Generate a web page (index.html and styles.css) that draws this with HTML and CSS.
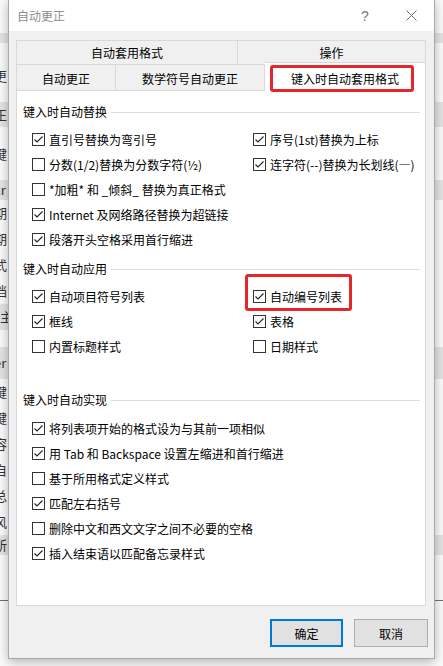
FILE: index.html
```html
<!DOCTYPE html>
<html lang="zh-CN">
<head>
  <meta charset="UTF-8" />
  <meta name="viewport" content="width=device-width, initial-scale=1" />
  <title>自动更正</title>
  <link rel="stylesheet" href="styles.css">
</head>
<body>
  <!-- Word window behind the dialog, only its edges show -->
  <div class="backdrop">
    <div class="bd bd-top"></div>
    <div class="bd band bd-thin"></div>
    <div class="bd bd-tall"><span>更</span></div>
    <div class="bd band"><span>正</span></div>
    <div class="bd bd-mid"><span>键</span></div>
    <div class="bd band bd-short"><span>cr</span></div>
    <div class="bd-lines"><span>期</span><span>期</span><span>式</span><span>档</span><span class="hl">主</span></div>
    <div class="bd bd-gap"></div>
    <div class="bd band bd-wide"><span>er</span></div>
    <div class="bd-lines"><span>键</span><span>键</span><span>容</span><span>自</span><span>总</span><span>风</span></div>
    <div class="bd band bd-short"><span>所</span></div>
    <div class="bd bd-foot"></div>
  </div>

  <div class="dialog">
    <div class="titlebar">
      <span class="title">自动更正</span>
      <span class="caption-btn help">?</span>
      <span class="caption-btn">
        <svg width="11" height="11" viewBox="0 0 11 11"><path d="M0.5 0.5 L10.5 10.5 M10.5 0.5 L0.5 10.5" stroke="#6b6b6b" stroke-width="1" fill="none"/></svg>
      </span>
    </div>

    <div class="tabs">
      <div class="tab-row row-top">
        <div class="tab tab-wide">自动套用格式</div>
        <div class="tab tab-rest">操作</div>
      </div>
      <div class="tab-row">
        <div class="tab tab-a">自动更正</div>
        <div class="tab tab-b">数学符号自动更正</div>
        <div class="tab tab-c active">键入时自动套用格式<span class="mark"></span></div>
      </div>
    </div>

    <div class="panel">
      <div class="section">
        <div class="legend">键入时自动替换</div>
        <div class="options">
          <label class="opt"><span class="box"><svg width="11" height="11" viewBox="0 0 11 11"><polyline points="1.5,5.5 4,8 9.5,2.5" fill="none" stroke="#222" stroke-width="1.1"/></svg></span>直引号替换为弯引号</label>
          <label class="opt"><span class="box"><svg width="11" height="11" viewBox="0 0 11 11"><polyline points="1.5,5.5 4,8 9.5,2.5" fill="none" stroke="#222" stroke-width="1.1"/></svg></span>序号(1st)替换为上标</label>
          <label class="opt"><span class="box"></span>分数(1/2)替换为分数字符(½)</label>
          <label class="opt"><span class="box"><svg width="11" height="11" viewBox="0 0 11 11"><polyline points="1.5,5.5 4,8 9.5,2.5" fill="none" stroke="#222" stroke-width="1.1"/></svg></span>连字符(--)替换为长划线(—)</label>
          <label class="opt wide"><span class="box"></span>*加粗* 和 _倾斜_ 替换为真正格式</label>
          <label class="opt wide"><span class="box"><svg width="11" height="11" viewBox="0 0 11 11"><polyline points="1.5,5.5 4,8 9.5,2.5" fill="none" stroke="#222" stroke-width="1.1"/></svg></span>Internet 及网络路径替换为超链接</label>
          <label class="opt wide"><span class="box"><svg width="11" height="11" viewBox="0 0 11 11"><polyline points="1.5,5.5 4,8 9.5,2.5" fill="none" stroke="#222" stroke-width="1.1"/></svg></span>段落开头空格采用首行缩进</label>
        </div>
      </div>

      <div class="section gap-sm">
        <div class="legend">键入时自动应用</div>
        <div class="options">
          <label class="opt"><span class="box"><svg width="11" height="11" viewBox="0 0 11 11"><polyline points="1.5,5.5 4,8 9.5,2.5" fill="none" stroke="#222" stroke-width="1.1"/></svg></span>自动项目符号列表</label>
          <label class="opt"><span class="box"><svg width="11" height="11" viewBox="0 0 11 11"><polyline points="1.5,5.5 4,8 9.5,2.5" fill="none" stroke="#222" stroke-width="1.1"/></svg></span>自动编号列表<span class="mark mark-opt"></span></label>
          <label class="opt"><span class="box"><svg width="11" height="11" viewBox="0 0 11 11"><polyline points="1.5,5.5 4,8 9.5,2.5" fill="none" stroke="#222" stroke-width="1.1"/></svg></span>框线</label>
          <label class="opt"><span class="box"><svg width="11" height="11" viewBox="0 0 11 11"><polyline points="1.5,5.5 4,8 9.5,2.5" fill="none" stroke="#222" stroke-width="1.1"/></svg></span>表格</label>
          <label class="opt"><span class="box"></span>内置标题样式</label>
          <label class="opt"><span class="box"></span>日期样式</label>
        </div>
      </div>

      <div class="section gap-lg">
        <div class="legend">键入时自动实现</div>
        <div class="options single">
          <label class="opt"><span class="box"><svg width="11" height="11" viewBox="0 0 11 11"><polyline points="1.5,5.5 4,8 9.5,2.5" fill="none" stroke="#222" stroke-width="1.1"/></svg></span>将列表项开始的格式设为与其前一项相似</label>
          <label class="opt"><span class="box"><svg width="11" height="11" viewBox="0 0 11 11"><polyline points="1.5,5.5 4,8 9.5,2.5" fill="none" stroke="#222" stroke-width="1.1"/></svg></span>用 Tab 和 Backspace 设置左缩进和首行缩进</label>
          <label class="opt"><span class="box"></span>基于所用格式定义样式</label>
          <label class="opt"><span class="box"><svg width="11" height="11" viewBox="0 0 11 11"><polyline points="1.5,5.5 4,8 9.5,2.5" fill="none" stroke="#222" stroke-width="1.1"/></svg></span>匹配左右括号</label>
          <label class="opt"><span class="box"></span>删除中文和西文文字之间不必要的空格</label>
          <label class="opt"><span class="box"><svg width="11" height="11" viewBox="0 0 11 11"><polyline points="1.5,5.5 4,8 9.5,2.5" fill="none" stroke="#222" stroke-width="1.1"/></svg></span>插入结束语以匹配备忘录样式</label>
        </div>
      </div>
    </div>

    <div class="actions">
      <button class="btn primary">确定</button>
      <button class="btn">取消</button>
    </div>
  </div>
</body>
</html>
```

FILE: styles.css
```css
* {
  box-sizing: border-box;
}
html, body {
  margin: 0;
}
body {
  position: relative;
  width: 443px;
  height: 666px;
  overflow: hidden;
  background: #fafafa;
  font-family: "Noto Sans CJK SC", "Microsoft YaHei", sans-serif;
  font-size: 12px;
  line-height: 16px;
  color: #000;
}

/* backdrop */
.backdrop {
  color: #333;
  font-size: 13px;
}
.bd {
  display: flex;
  align-items: center;
}
.bd span, .bd-lines span {
  margin-left: -6px;
}
.band {
  background: #e3e3e3;
  height: 25px;
}
.bd-top { height: 33px; }
.bd-thin { height: 10px; }
.bd-tall { height: 59px; padding-top: 6px; }
.bd-mid { height: 53px; }
.bd-short { height: 20px; }
.bd-wide { height: 32px; }
.bd-gap { height: 17px; }
.bd-lines {
  display: flex;
  flex-direction: column;
}
.bd-lines span {
  height: 26px;
  line-height: 26px;
}
.bd-lines .hl {
  background: #e3e3e3;
  width: 20px;
  padding-left: 6px;
}
.bd-foot {
  height: 46px;
  border-bottom: 1px solid #6e6e6e;
}

/* dialog */
.dialog {
  position: absolute;
  left: 8px;
  top: -1px;
  width: 427px;
  height: 660px;
  background: #f0f0f0;
  border: 1px solid #a9a9a9;
  box-shadow: 0 3px 10px rgba(0, 0, 0, 0.28);
  display: flex;
  flex-direction: column;
}
.titlebar {
  height: 31px;
  background: #fff;
  display: flex;
  align-items: center;
  padding-left: 8px;
}
.title {
  flex: 1;
  color: #8c8c8c;
}
.caption-btn {
  width: 46px;
  height: 31px;
  display: flex;
  align-items: center;
  justify-content: center;
}
.help {
  font-family: "Liberation Sans", sans-serif;
  font-size: 14px;
  color: #777;
}

/* tabs */
.tabs {
  margin: 9px 0 0 7px;
  width: 410px;
}
.tab-row {
  display: flex;
  height: 26px;
}
.tab-row.row-top {
  height: 24px;
}
.tab {
  border: 1px solid #d9d9d9;
  border-bottom: none;
  display: flex;
  align-items: center;
  justify-content: center;
  padding-top: 2px;
  white-space: nowrap;
}
.tab + .tab {
  border-left: none;
}
.row-top .tab {
  padding-top: 0;
}
.tab-wide { width: 222px; }
.tab-rest { width: 188px; }
.tab-a { width: 100px; }
.tab-b { width: 149px; }
.tab-c { width: 161px; }
.tab.active {
  position: relative;
  z-index: 1;
  background: #fff;
  height: 29px;
  margin-top: -2px;
  padding-top: 3px;
}
.mark {
  position: absolute;
  left: 5px;
  top: 2px;
  width: 144px;
  height: 27px;
  border: 3px solid #e5262a;
  border-radius: 3px;
}
.mark-opt {
  left: -8px;
  top: -10px;
  width: 107px;
  height: 37px;
}

/* panel */
.panel {
  width: 410px;
  height: 516px;
  margin-left: 7px;
  background: #fff;
  border: 1px solid #d9d9d9;
  padding: 11px 5px 0 6px;
}
.section.gap-sm {
  margin-top: 7px;
}
.section.gap-lg {
  margin-top: 31px;
}
.legend {
  display: flex;
  align-items: center;
  height: 20px;
  white-space: nowrap;
}
.legend::after {
  content: "";
  flex: 1;
  height: 1px;
  background: #dcdcdc;
  margin-left: 4px;
}
.options {
  display: grid;
  grid-template-columns: 221px 1fr;
  grid-auto-rows: 25px;
  margin-top: 5px;
  padding-left: 9px;
}
.options.single {
  grid-template-columns: 1fr;
  margin-top: 6px;
}
.opt {
  position: relative;
  display: flex;
  align-items: center;
  gap: 4px;
  white-space: nowrap;
}
.opt.wide {
  grid-column: span 2;
}
.box {
  width: 13px;
  height: 13px;
  flex: none;
  border: 1px solid #333;
  background: #fff;
  display: flex;
  align-items: center;
  justify-content: center;
}
.box svg {
  display: block;
}

/* buttons */
.actions {
  display: flex;
  justify-content: flex-end;
  gap: 11px;
  margin-top: 13px;
  padding-right: 6px;
}
.btn {
  width: 74px;
  height: 28px;
  background: #e1e1e1;
  border: 1px solid #adadad;
  font-family: inherit;
  font-size: 12px;
  color: #000;
  padding: 0;
}
.btn.primary {
  width: 73px;
  border: 2px solid #0078d7;
}
```
